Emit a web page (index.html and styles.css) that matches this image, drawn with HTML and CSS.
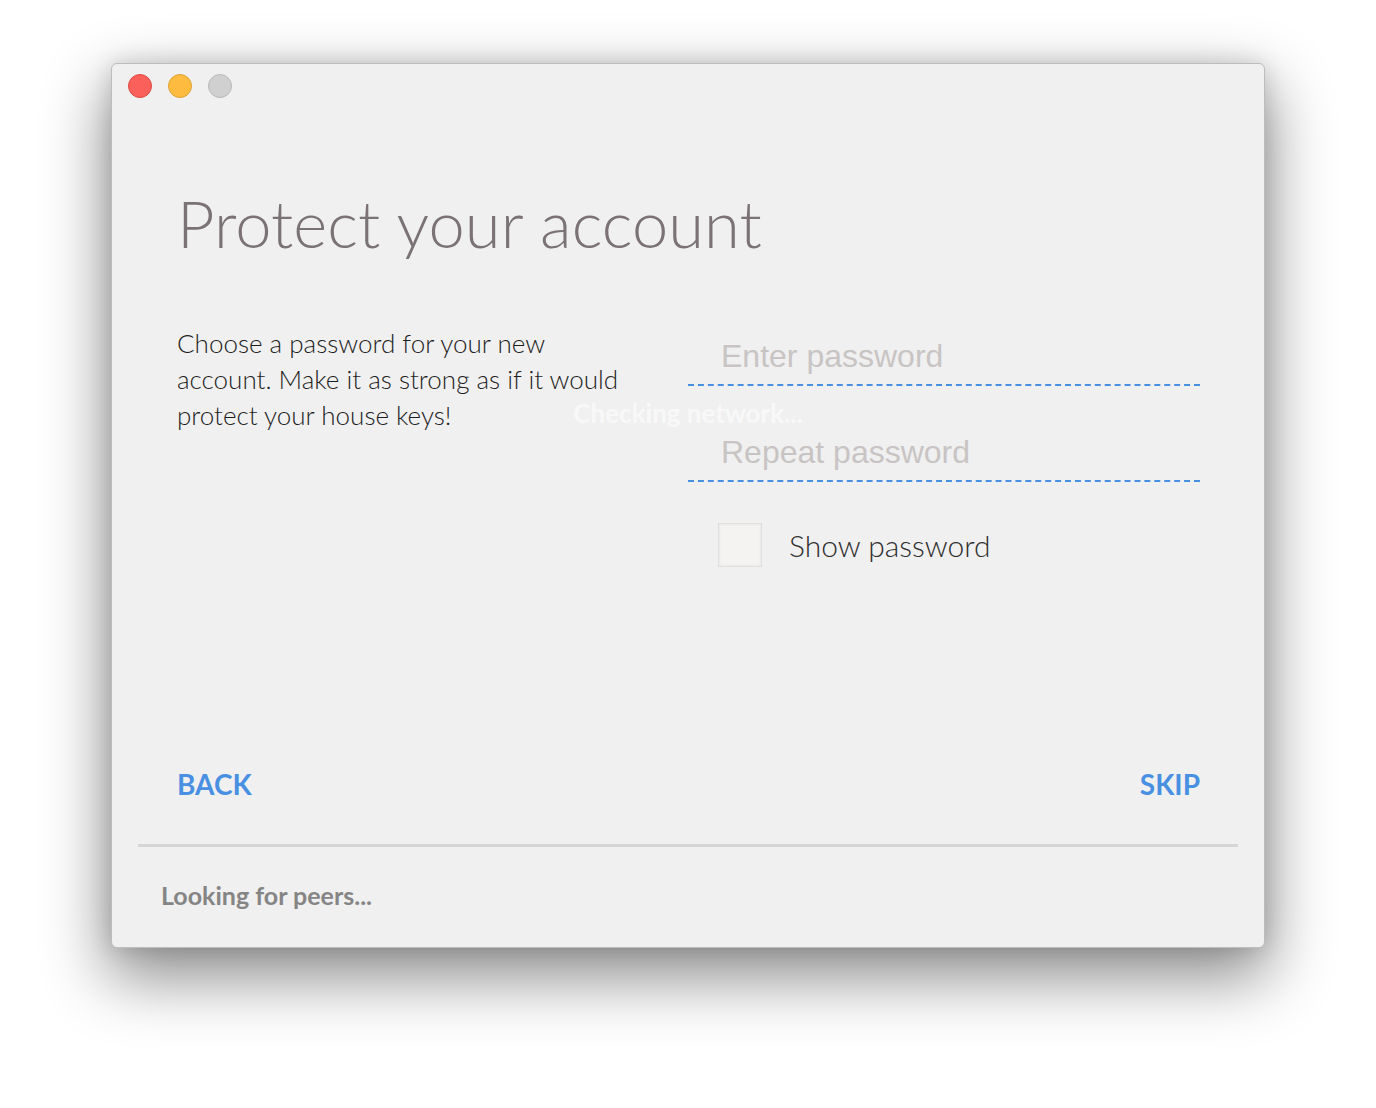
FILE: index.html
```html
<!DOCTYPE html>
<html lang="en">
<head>
<meta charset="utf-8">
<title>Protect your account</title>
<link rel="stylesheet" href="styles.css">
</head>
<body>
<div class="window">
  <div class="titlebar">
    <span class="light light-close"></span>
    <span class="light light-min"></span>
    <span class="light light-max"></span>
  </div>
  <div class="content">
    <h1 class="title">Protect your account</h1>
    <div class="row">
      <p class="desc">Choose a password for your new account. Make it as strong as if it would protect your house keys!</p>
      <div class="form">
        <input class="field" type="password" placeholder="Enter password">
        <input class="field field-second" type="password" placeholder="Repeat password">
        <label class="check">
          <input class="check-box" type="checkbox">
          <span class="check-label">Show password</span>
        </label>
      </div>
    </div>
    <div class="spacer"></div>
    <div class="actions">
      <a class="action" href="#">BACK</a>
      <a class="action" href="#">SKIP</a>
    </div>
  </div>
  <div class="separator"></div>
  <div class="status">Looking for peers...</div>
  <div class="toast">Checking network...</div>
</div>
</body>
</html>
```
FILE: styles.css
```css
html, body {
  margin: 0;
  padding: 0;
  background: #ffffff;
}

body {
  width: 1376px;
  height: 1108px;
  overflow: hidden;
  font-family: Lato, "Noto Sans", sans-serif;
}

.window {
  position: relative;
  box-sizing: border-box;
  width: 1154px;
  height: 885px;
  margin: 63px 0 0 111px;
  background: #f0f0f0;
  border: 1px solid #bdbdbd;
  border-radius: 6px;
  box-shadow: 0 26px 64px 4px rgba(0, 0, 0, 0.45), 0 0 22px rgba(0, 0, 0, 0.14);
  display: flex;
  flex-direction: column;
}

.titlebar {
  height: 46px;
  display: flex;
  gap: 16px;
  padding: 10px 0 0 16px;
  box-sizing: border-box;
}

.light {
  width: 24px;
  height: 24px;
  border-radius: 50%;
  box-sizing: border-box;
}

.light-close {
  background: #fc605b;
  border: 1px solid #de4a45;
}

.light-min {
  background: #fdbc40;
  border: 1px solid #dea236;
}

.light-max {
  background: #d0d0d0;
  border: 1px solid #b8b8b8;
}

.content {
  flex: 1;
  display: flex;
  flex-direction: column;
  padding: 0 64px 0 65px;
}

.title {
  margin: 73px 0 0 0;
  font-family: Lato, sans-serif;
  font-weight: 300;
  font-size: 65px;
  line-height: 80px;
  color: #7a7274;
  letter-spacing: 0.1px;
}

.row {
  display: flex;
  margin-top: 62px;
}

.desc {
  width: 455px;
  margin: 0;
  font-family: Lato, sans-serif;
  font-weight: 300;
  font-size: 26px;
  line-height: 36px;
  color: #1e1e1e;
}

.form {
  margin-left: auto;
  margin-top: 4px;
  width: 512px;
  display: flex;
  flex-direction: column;
}

.field {
  box-sizing: border-box;
  width: 512px;
  height: 57px;
  margin: 0;
  padding: 0 0 0 33px;
  background: transparent;
  border: none;
  border-bottom: 2px dashed #4a90e2;
  outline: none;
  font-family: "Liberation Sans", Arial, sans-serif;
  font-size: 32px;
  color: #333;
}

.field::placeholder {
  color: #c9c4c4;
}

.field-second {
  margin-top: 39px;
}

.check {
  display: flex;
  align-items: center;
  margin: 41px 0 0 30px;
  gap: 27px;
}

.check-box {
  appearance: none;
  -webkit-appearance: none;
  box-sizing: border-box;
  width: 44px;
  height: 44px;
  margin: 0;
  background: #f4f3f2;
  border: 1px solid #e2e0df;
  box-shadow: inset 0 0 3px rgba(0, 0, 0, 0.08);
}

.check-label {
  font-family: Lato, sans-serif;
  font-weight: 300;
  font-size: 30px;
  line-height: 40px;
  color: #2e2e2e;
}

.spacer {
  flex: 1;
}

.actions {
  display: flex;
  justify-content: space-between;
  height: 36px;
}

.action {
  font-family: Lato, sans-serif;
  font-weight: 700;
  font-size: 28px;
  line-height: 36px;
  color: #4a90e2;
  text-decoration: none;
}

.separator {
  height: 3px;
  margin: 42px 26px 0 26px;
  background: #d6d6d6;
}

.status {
  margin: 33px 0 37px 49px;
  font-family: Lato, sans-serif;
  font-weight: 700;
  font-size: 25px;
  line-height: 30px;
  color: #858585;
}

.toast {
  position: absolute;
  left: 0;
  right: 0;
  top: 331px;
  text-align: center;
  font-family: Lato, sans-serif;
  font-weight: 700;
  font-size: 26px;
  line-height: 36px;
  color: rgba(255, 255, 255, 0.6);
  pointer-events: none;
}
```
